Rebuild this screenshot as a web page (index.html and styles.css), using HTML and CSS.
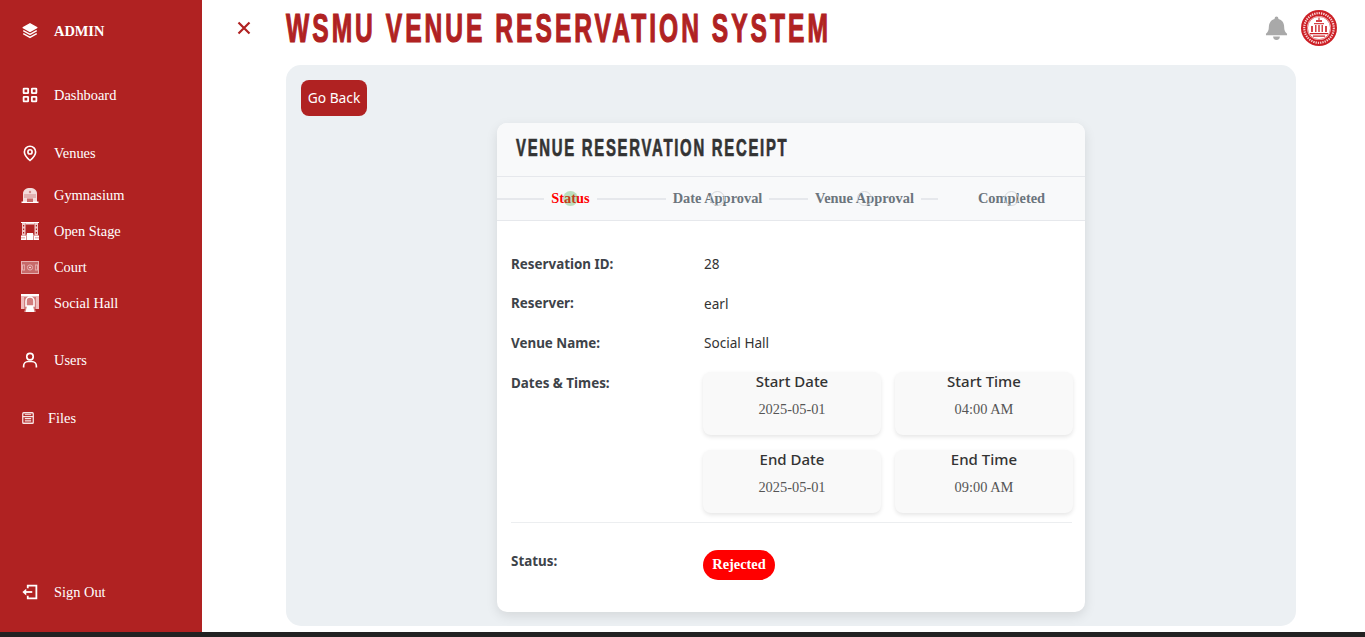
FILE: index.html
```html
<!DOCTYPE html>
<html lang="en">
<head>
  <meta charset="UTF-8">
  <meta name="viewport" content="width=device-width, initial-scale=1.0">
  <title>WSMU Venue Reservation System</title>
  <link rel="stylesheet" href="styles.css">
</head>
<body>
  <div class="shell">
    <aside class="sidebar">
      <div class="nav-item brand">
        <svg class="icon" viewBox="0 0 24 24" fill="none" stroke="#fff" stroke-width="2" stroke-linejoin="round"><path d="M12 2.500 3 7.500l9 5 9-5z" fill="#fff"/><path d="m3 11.500 9 5 9-5"/><path d="m3 15.500 9 5 9-5"/></svg>
        <span>ADMIN</span>
      </div>
      <a class="nav-item dashboard">
        <svg class="icon" viewBox="0 0 24 24" fill="none" stroke="#fff" stroke-width="2.400"><rect x="3.500" y="3.500" width="6" height="6" rx=".5"/><rect x="14.500" y="3.500" width="6" height="6" rx=".5"/><rect x="3.500" y="14.500" width="6" height="6" rx=".5"/><rect x="14.500" y="14.500" width="6" height="6" rx=".5"/></svg>
        <span>Dashboard</span>
      </a>
      <a class="nav-item venues">
        <svg class="icon" viewBox="0 0 24 24" fill="none" stroke="#fff" stroke-width="2.200"><path d="M12 22c-4.300-3.800-7.500-7.300-7.500-11.500a7.500 7.500 0 0 1 15 0c0 4.200-3.200 7.700-7.500 11.500z"/><circle cx="12" cy="10.500" r="2.800"/></svg>
        <span>Venues</span>
      </a>
      <a class="nav-item sub">
        <svg class="icon wide" viewBox="0 0 18 16"><path d="M2 15V6.500C2 3 5 1 9 1s7 2 7 5.500V15z" fill="#f3dcdc"/><path d="M.5 14.500h17V16H.5z" fill="#fff"/><path d="M3 7.500h12v1H3zM3 9.500h12v1H3z" fill="#cf8a8a"/><rect x="6" y="11.500" width="6" height="3.500" fill="#c76a6a"/><circle cx="9" cy="5" r="1.200" fill="#cf8a8a"/></svg>
        <span>Gymnasium</span>
      </a>
      <a class="nav-item sub">
        <svg class="icon wide stage" viewBox="0 0 18 18"><path d="M0 0h18v1H0zM0 13.500h18V18H0z" fill="#fff"/><path d="M1 1h3.500v12.500H1zM13.500 1H17v12.500h-3.500z" fill="#efc8c8"/><path d="M4.500 1h9v1.500h-9z" fill="#f6dddd"/><path d="M4.500 18 6 11h6l1.500 7z" fill="#fff"/><path d="M5 13.500h1V18H5zM12 13.500h1V18h-1z" fill="#b02222" opacity=".5"/><path d="M0 15.500h4v.8H0zM14 15.500h4v.8h-4z" fill="#b02222" opacity=".6"/><path d="M2 3h1.200v1.500H2zM2 6.500h1.200V8H2zM2 10h1.200v1.500H2zM14.800 3H16v1.500h-1.200zM14.800 6.500H16V8h-1.200zM14.800 10H16v1.500h-1.200z" fill="#b02222"/></svg>
        <span>Open Stage</span>
      </a>
      <a class="nav-item sub">
        <svg class="icon wide court" viewBox="0 0 18 13"><rect width="18" height="13" fill="#e7b0b0"/><rect x="1" y="1" width="16" height="11" fill="#c76a6a"/><path d="M1 3.500h3v6H1zM14 3.500h3v6h-3z" fill="#e7b0b0"/><path d="M2 4.500h1.200v4H2zM14.800 4.500H16v4h-1.200z" fill="#c76a6a"/><circle cx="9" cy="6.500" r="2.600" fill="none" stroke="#e7b0b0"/><circle cx="9" cy="6.500" r=".8" fill="#fff"/></svg>
        <span>Court</span>
      </a>
      <a class="nav-item sub">
        <svg class="icon wide stage" viewBox="0 0 18 18"><rect width="18" height="18" fill="#d27d7d"/><path d="M0 0h18v2.500H0z" fill="#fff"/><path d="M0 2.500h3V15H0zM15 2.500h3V15h-3z" fill="#efbcbc"/><path d="M5 12V7a4 4 0 0 1 8 0v5z" fill="none" stroke="#fff" stroke-width="1.500"/><path d="M4.500 18 6 12h6l1.500 6z" fill="#fff"/><path d="M0 15h4l-1 3H0zM18 15h-4l1 3h3z" fill="#b02222"/></svg>
        <span>Social Hall</span>
      </a>
      <a class="nav-item users">
        <svg class="icon" viewBox="0 0 24 24" fill="none" stroke="#fff" stroke-width="2.200"><circle cx="12" cy="7.500" r="4.300"/><path d="M3.500 22v-2a6 6 0 0 1 6-6h5a6 6 0 0 1 6 6v2"/></svg>
        <span>Users</span>
      </a>
      <a class="nav-item files">
        <svg class="icon" viewBox="0 0 24 24" fill="none" stroke="#f8e6e6" stroke-width="2.200"><rect x="3" y="3" width="18" height="18" rx="1.500"/><path d="M3 9.500h18M6.500 13h11M6.500 17h11"/><path d="M6.500 6.200h11" stroke-width="1.600"/></svg>
        <span>Files</span>
      </a>
      <a class="nav-item signout">
        <svg class="icon" viewBox="0 0 24 24" fill="none" stroke="#fff" stroke-width="2.400"><path d="M9 7V3.500h11.500v17H9V17"/><path d="M15 12H5"/><path d="M7 7.500 1.800 12 7 16.500z" fill="#fff" stroke="none"/></svg>
        <span>Sign Out</span>
      </a>
    </aside>

    <div class="main">
      <header class="topbar">
        <svg class="close-icon" viewBox="0 0 14 14" fill="none" stroke="#b02222" stroke-width="2.200"><path d="m1.500 1.500 11 11M12.500 1.500l-11 11"/></svg>
        <h1 class="app-title">WSMU VENUE RESERVATION SYSTEM</h1>
        <svg class="bell" viewBox="0 0 24 26" fill="#a9a9a9"><path d="M12 1.500a2 2 0 0 1 2 2v.700c4 .9 6 4.300 6 8.300 0 3.500 1 5.500 3 7v1.500H1V19.500c2-1.500 3-3.500 3-7 0-4 2-7.400 6-8.300V3.500a2 2 0 0 1 2-2z"/><path d="M8.500 22.500h7a3.500 3.500 0 0 1-7 0z"/></svg>
        <svg class="seal" viewBox="0 0 36 36">
          <circle cx="18" cy="18" r="18" fill="#cc1f25"/>
          <circle cx="18" cy="18" r="14.800" fill="none" stroke="#f8d4d5" stroke-width="2.200" stroke-dasharray="1.300 1"/>
          <circle cx="18" cy="18" r="12" fill="#fff"/>
          <circle cx="18" cy="18" r="11.500" fill="none" stroke="#dd5a5e" stroke-width=".8"/>
          <path d="M15 10h6v2h-6zM13 13h10v1.200H13zM14 15h1.500v7H14zM17.200 15h1.600v7h-1.600zM20.500 15H22v7h-1.500zM10 16h2v6h-2zM24 16h2v6h-2z" fill="#d44347"/>
          <path d="M9 23h18v1.300H9zM12 25.500h12v1.200H12z" fill="#cc1f25"/>
          <path d="M17 7.500h2V10h-2z" fill="#e58184"/>
        </svg>
      </header>

      <section class="panel">
        <button class="back-btn">Go Back</button>

        <div class="receipt">
          <div class="receipt-head">
            <h2>VENUE RESERVATION RECEIPT</h2>
          </div>

          <div class="stepper">
            <div class="step active"><span class="step-label">Status</span><span class="dot"></span></div>
            <div class="step"><span class="step-label">Date Approval</span><span class="dot"></span></div>
            <div class="step"><span class="step-label">Venue Approval</span><span class="dot"></span></div>
            <div class="step last"><span class="step-label">Completed</span><span class="dot"></span></div>
          </div>

          <div class="receipt-body">
            <div class="row">
              <div class="row-label">Reservation ID:</div>
              <div class="row-value">28</div>
            </div>
            <div class="row">
              <div class="row-label">Reserver:</div>
              <div class="row-value">earl</div>
            </div>
            <div class="row">
              <div class="row-label">Venue Name:</div>
              <div class="row-value">Social Hall</div>
            </div>
            <div class="row dates-row">
              <div class="row-label">Dates &amp; Times:</div>
              <div class="date-grid">
                <div class="date-card"><h4>Start Date</h4><p>2025-05-01</p></div>
                <div class="date-card"><h4>Start Time</h4><p>04:00 AM</p></div>
                <div class="date-card"><h4>End Date</h4><p>2025-05-01</p></div>
                <div class="date-card"><h4>End Time</h4><p>09:00 AM</p></div>
              </div>
            </div>
            <hr class="divider">
            <div class="row status-row">
              <div class="row-label">Status:</div>
              <div class="badge">Rejected</div>
            </div>
          </div>
        </div>
      </section>
    </div>
  </div>
  <div class="taskbar"></div>
</body>
</html>
```

FILE: styles.css
```css
* {
  box-sizing: border-box;
}

html, body {
  height: 100%;
}

body {
  margin: 0;
  background-color: #fff;
  color: #333;
  font-family: 'Noto Sans', sans-serif;
  display: flex;
  flex-direction: column;
  overflow: hidden;
}

.shell {
  display: flex;
  height: 632px;
}

/* Sidebar */
.sidebar {
  width: 202px;
  flex-shrink: 0;
  background-color: #b02222;
  color: #fff;
  font-family: 'Liberation Serif', serif;
  font-size: 14.4px;
  display: flex;
  flex-direction: column;
  padding: 13px 0 22px 21px;
}

.nav-item {
  height: 36px;
  display: flex;
  align-items: center;
  gap: 15px;
  flex-shrink: 0;
}

.icon {
  width: 18px;
  height: 18px;
  flex-shrink: 0;
}

.icon.court {
  height: 13px;
}

.brand {
  font-weight: bold;
}

.dashboard {
  margin-top: 28px;
}

.venues {
  margin-top: 22px;
}

.venues + .sub {
  margin-top: 6px;
}

.users {
  margin-top: 21px;
}

.files {
  margin-top: 22px;
  gap: 13px;
}

.files .icon {
  width: 14px;
  height: 14px;
}

.signout {
  margin-top: auto;
}

/* Top bar */
.main {
  flex-grow: 1;
  display: flex;
  flex-direction: column;
  min-width: 0;
}

.topbar {
  height: 65px;
  flex-shrink: 0;
  display: flex;
  align-items: center;
  padding: 0 28px 10px 35px;
}

.close-icon {
  width: 14px;
  height: 14px;
}

.app-title {
  margin: 0 0 0 35px;
  flex-grow: 1;
  color: #b02222;
  font-family: 'Liberation Sans', sans-serif;
  font-size: 41px;
  line-height: 44px;
  font-weight: bold;
  letter-spacing: 5px;
  white-space: nowrap;
  /* no condensed face installed, so squeeze the bold one */
  transform: scaleX(0.6);
  transform-origin: left center;
  -webkit-text-stroke: 1.2px #b02222;
}

.bell {
  width: 23px;
  height: 25px;
  margin-right: 13px;
}

.seal {
  width: 36px;
  height: 36px;
}

/* Grey panel */
.panel {
  width: 1010px;
  height: 561px;
  margin-left: 84px;
  padding: 15px;
  background-color: #ecf0f3;
  border-radius: 15px;
}

.back-btn {
  display: block;
  width: 66px;
  height: 36px;
  padding: 0 0 2px;
  border: none;
  border-radius: 8px;
  background-color: #b02222;
  color: #fff;
  font-family: 'Noto Sans', sans-serif;
  font-size: 13.8px;
}

/* Receipt card */
.receipt {
  width: 588px;
  height: 489px;
  margin: 7px 0 0 196px;
  background-color: #fff;
  border-radius: 10px;
  box-shadow: 0 4px 12px rgba(0, 0, 0, 0.1);
  overflow: hidden;
}

.receipt-head {
  height: 54px;
  display: flex;
  align-items: center;
  padding: 0 0 3px 19px;
  background-color: #f8f9fa;
  border-bottom: 1px solid #e6e8ec;
}

.receipt-head h2 {
  margin: 0;
  color: #333;
  font-family: 'Liberation Sans', sans-serif;
  font-size: 24px;
  font-weight: bold;
  letter-spacing: 2.8px;
  white-space: nowrap;
  transform: scaleX(0.62);
  transform-origin: left center;
  -webkit-text-stroke: 0.7px #333;
}

.stepper {
  height: 44px;
  display: flex;
  background-color: #f8f9fa;
  border-bottom: 1px solid #e6e8ec;
  font-family: 'Liberation Serif', serif;
  font-size: 14.4px;
  font-weight: bold;
  color: #6c757d;
}

.step {
  flex: 1;
  position: relative;
  display: flex;
  align-items: center;
  justify-content: center;
}

/* connector runs the full width of the step, label hides the middle of it */
.step::before {
  content: "";
  position: absolute;
  left: 0;
  right: 0;
  top: 21px;
  height: 2px;
  background-color: #e6e8ec;
}

.step.last::before {
  display: none;
}

.step-label {
  position: relative;
  padding: 0 7px;
  background-color: #f8f9fa;
}

.dot {
  position: absolute;
  left: 50%;
  top: 14px;
  width: 15px;
  height: 15px;
  margin-left: -8px;
  border: 1px solid #d5d7da;
  border-radius: 50%;
}

.step.active {
  color: #f00;
}

.step.active .dot {
  background-color: rgba(76, 175, 80, 0.35);
  border: none;
}

.receipt-body {
  padding: 0 13px 0 14px;
  font-size: 13.6px;
}

.row {
  display: grid;
  grid-template-columns: 193px 1fr;
  height: 39.500px;
  align-items: center;
}

.row:first-child {
  margin-top: 23px;
}

.row-label {
  font-size: 13.4px;
  font-weight: bold;
  color: #3d4349;
}

.row-value {
  color: #333;
}

.dates-row {
  height: auto;
  align-items: start;
  margin-top: 9px;
}

.dates-row .row-label {
  margin-top: 2px;
}

.date-grid {
  display: grid;
  grid-template-columns: 178px 178px;
  gap: 15px 14px;
  margin-left: -1px;
}

.date-card {
  height: 63px;
  background-color: #f9f9f9;
  border-radius: 8px;
  box-shadow: 0 2px 4px rgba(0, 0, 0, 0.1);
  text-align: center;
}

.date-card h4 {
  margin: 0;
  font-size: 15px;
  line-height: 19px;
  font-weight: 500;
  color: #333;
}

.date-card p {
  margin: 8px 0 0;
  font-family: 'Liberation Serif', serif;
  font-size: 14.4px;
  line-height: 20px;
  color: #555;
}

.divider {
  height: 1px;
  margin: 9px 0 0;
  border: none;
  background-color: #eceef0;
}

.status-row {
  height: auto;
  align-items: start;
  margin-top: 27px;
}

.status-row .row-label {
  margin-top: 2px;
}

.badge {
  width: 72px;
  height: 30px;
  margin-left: -1px;
  display: flex;
  align-items: center;
  justify-content: center;
  border-radius: 15px;
  background-color: #f00;
  color: #fff;
  font-family: 'Liberation Serif', serif;
  font-size: 14.4px;
  font-weight: bold;
}

.taskbar {
  height: 5px;
  background-color: #222;
}
```
